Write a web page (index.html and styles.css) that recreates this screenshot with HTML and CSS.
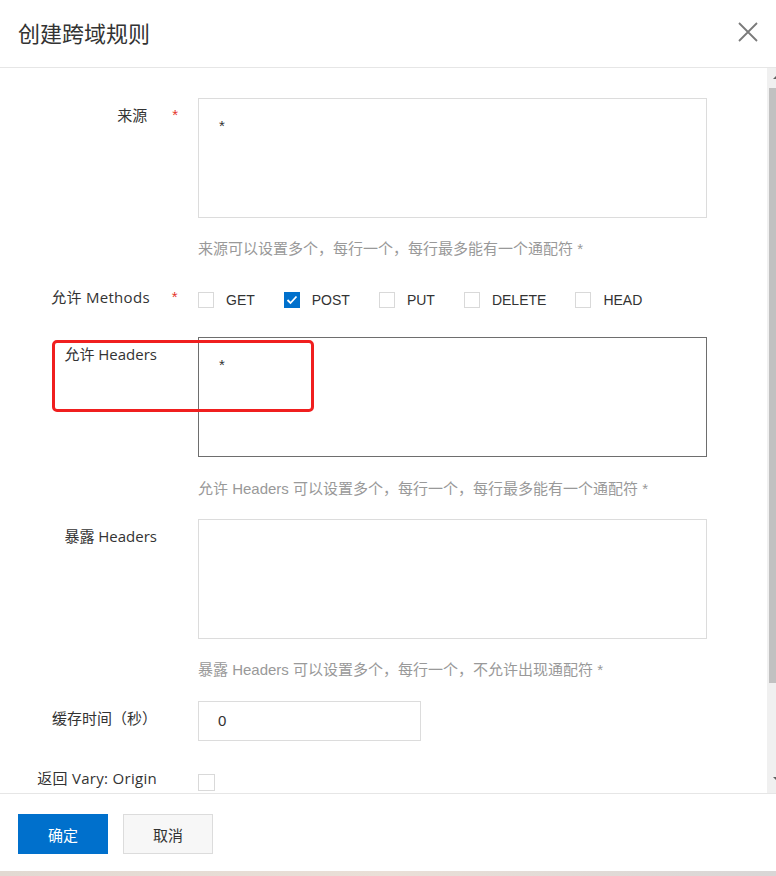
FILE: index.html
```html
<!DOCTYPE html>
<html lang="zh-CN">
<head>
<meta charset="utf-8">
<title>创建跨域规则</title>
<link rel="stylesheet" href="styles.css">
</head>
<body>
<div class="dialog">
  <header class="dlg-head">
    <h1 class="dlg-title">创建跨域规则</h1>
    <button class="dlg-close" aria-label="关闭">
      <svg width="20" height="20" viewBox="0 0 20 20"><path d="M1 1 L19 19 M19 1 L1 19" stroke="#7a7a7a" stroke-width="1.8" fill="none"/></svg>
    </button>
  </header>
  <div class="dlg-body">
    <div class="form">
      <div class="item item-origin">
        <div class="label req"><span>来源</span><i class="star">*</i></div>
        <div class="ctrl">
          <div class="textarea">*</div>
          <div class="help">来源可以设置多个，每行一个，每行最多能有一个通配符 *</div>
        </div>
      </div>
      <div class="item item-methods">
        <div class="label req"><span>允许 Methods</span><i class="star">*</i></div>
        <div class="ctrl checks">
          <label class="check"><span class="box"></span><span>GET</span></label>
          <label class="check"><span class="box on"><svg width="12" height="10" viewBox="0 0 12 10"><path d="M1.5 5 L4.5 8 L10.5 1.5" stroke="#fff" stroke-width="1.8" fill="none"/></svg></span><span>POST</span></label>
          <label class="check"><span class="box"></span><span>PUT</span></label>
          <label class="check"><span class="box"></span><span>DELETE</span></label>
          <label class="check"><span class="box"></span><span>HEAD</span></label>
        </div>
      </div>
      <div class="item item-headers">
        <div class="label"><span>允许 Headers</span></div>
        <div class="ctrl">
          <div class="textarea focus">*</div>
          <div class="help">允许 Headers 可以设置多个，每行一个，每行最多能有一个通配符 *</div>
        </div>
        <div class="highlight"></div>
      </div>
      <div class="item item-expose">
        <div class="label"><span>暴露 Headers</span></div>
        <div class="ctrl">
          <div class="textarea"></div>
          <div class="help">暴露 Headers 可以设置多个，每行一个，不允许出现通配符 *</div>
        </div>
      </div>
      <div class="item item-cache">
        <div class="label"><span>缓存时间（秒）</span></div>
        <div class="ctrl">
          <div class="input">0</div>
        </div>
      </div>
      <div class="item item-vary">
        <div class="label"><span>返回 Vary: Origin</span></div>
        <div class="ctrl">
          <span class="box"></span>
        </div>
      </div>
    </div>
    <div class="scrollbar">
      <span class="arrow up"></span>
      <span class="thumb"></span>
      <span class="arrow down"></span>
    </div>
  </div>
  <footer class="dlg-foot">
    <button class="btn primary">确定</button>
    <button class="btn">取消</button>
  </footer>
  <div class="backdrop-strip"></div>
</div>
</body>
</html>
```
FILE: styles.css
```css
* { box-sizing: border-box; }
html, body { margin: 0; padding: 0; background: #fff; }
body {
  font-family: "Liberation Sans", "Noto Sans CJK SC", sans-serif;
  font-size: 15px;
  color: #333;
  width: 776px;
  height: 876px;
  overflow: hidden;
}
.dialog { display: flex; flex-direction: column; height: 876px; }

.dlg-head {
  height: 68px;
  border-bottom: 1px solid #e6e6e6;
  display: flex;
  align-items: center;
  justify-content: space-between;
  padding: 0 18px 4px 18px;
}
.dlg-title {
  margin: 0;
  font-size: 22px;
  font-weight: normal;
  color: #333;
}
.dlg-close {
  border: 0;
  background: transparent;
  padding: 0;
  width: 20px;
  height: 20px;
  display: flex;
}

.dlg-body {
  height: 725px;
  display: flex;
  overflow: hidden;
}
.form {
  flex: 1;
  padding-top: 30px;
}
.item {
  display: flex;
  position: relative;
}
.label {
  width: 198px;
  flex: none;
  display: flex;
  justify-content: flex-end;
  align-items: flex-start;
  padding-right: 41px;
  padding-top: 6px;
  line-height: 22px;
  color: #333;
  white-space: nowrap;
  font-family: "Open Sans", "Noto Sans CJK SC", sans-serif;
}
.label.req { padding-right: 20px; }
.star {
  font-style: normal;
  color: #e5352c;
  margin-left: 25px;
  font-size: 15px;
  font-family: "Liberation Sans", sans-serif;
}
.item-methods .star { margin-left: 22px; }
.ctrl { width: 509px; }
.textarea {
  height: 120px;
  border: 1px solid #dcdcdc;
  padding: 16px 20px;
  line-height: 22px;
  color: #333;
}
.textarea.focus { border-color: #6e6e6e; }
.help {
  margin-top: 20px;
  line-height: 22px;
  color: #999;
}
.item-methods { margin-top: 30px; }
.item-methods .label { padding-top: 0; margin-top: -2px; line-height: 18px; letter-spacing: 0.3px; }
.checks {
  display: flex;
  align-items: center;
  height: 20px;
  gap: 29px;
}
.check {
  display: flex;
  align-items: center;
  gap: 12px;
  font-size: 14px;
  color: #333;
}
.box {
  width: 16px;
  height: 16px;
  border: 1px solid #d9d9d9;
  background: #fff;
  display: flex;
  align-items: center;
  justify-content: center;
}
.box.on { background: #0070cc; border-color: #0070cc; }

.item-headers { margin-top: 27px; }
.item-headers .help { margin-top: 21px; }
.highlight {
  position: absolute;
  left: 52px;
  top: 3px;
  width: 262px;
  height: 72px;
  border: 3px solid #f01f1f;
  border-radius: 5px;
}
.item-expose { margin-top: 19px; }
.item-cache { margin-top: 20px; }
.input {
  width: 223px;
  height: 40px;
  border: 1px solid #dcdcdc;
  padding: 0 19px;
  line-height: 38px;
  color: #333;
}
.item-vary { margin-top: 33px; }
.item-vary .label { padding-top: 0; margin-top: -7px; letter-spacing: 0.3px; }
.item-vary .box { width: 17px; height: 17px; }

.scrollbar {
  width: 9px;
  flex: none;
  background: #f0f0f0;
  display: flex;
  flex-direction: column;
  align-items: flex-end;
  padding-top: 8px;
}
.thumb {
  width: 7px;
  height: 595px;
  background: #c1c1c1;
  margin-top: 9px;
}
.arrow {
  width: 0;
  height: 0;
  border-left: 3px solid transparent;
  border-right: 0 solid transparent;
}
.arrow.up { border-bottom: 3px solid #606060; }
.arrow.down { border-top: 3px solid #606060; margin-top: 94px; }

.dlg-foot {
  border-top: 1px solid #e6e6e6;
  height: 78px;
  padding: 20px 18px 0;
  display: flex;
  gap: 15px;
  align-items: flex-start;
}
.btn {
  width: 90px;
  height: 40px;
  border: 1px solid #dcdcdc;
  background: #f7f7f7;
  color: #333;
  font-family: inherit;
  font-size: 15px;
  padding: 0;
}
.btn.primary {
  background: #0070cc;
  border-color: #0070cc;
  color: #fff;
}
.backdrop-strip {
  height: 5px;
  background: linear-gradient(90deg, #e2d9d2, #eadfd7 50%, #d9d6d6);
}
```
